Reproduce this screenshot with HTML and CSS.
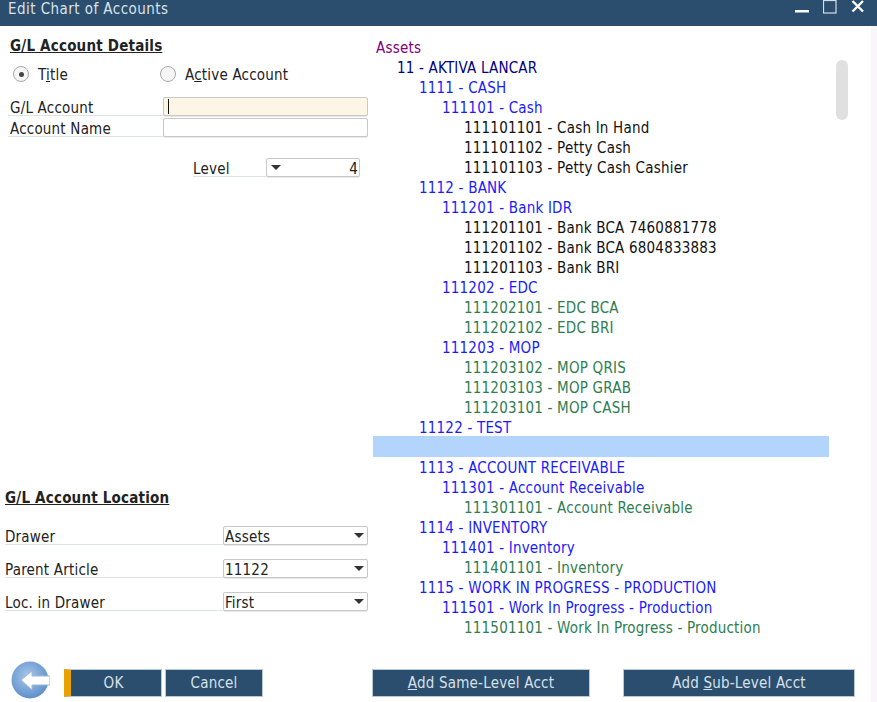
FILE: index.html
```html
<!DOCTYPE html>
<html lang="en">
<head>
<meta charset="utf-8">
<title>Edit Chart of Accounts</title>
<link rel="stylesheet" href="styles.css">
</head>
<body>
<div class="window">
  <header class="titlebar">
    <span class="title">Edit Chart of Accounts</span>
    <div class="controls">
      <svg class="ctl" width="14" height="14" viewBox="0 0 14 14"><rect x="0" y="10" width="14" height="2.5" fill="#fff"/></svg>
      <svg class="ctl" width="14" height="14" viewBox="0 0 14 14"><rect x="0.5" y="0.5" width="12.5" height="12.5" fill="none" stroke="#d5dee6" stroke-width="1.2"/></svg>
      <svg class="ctl" width="14" height="14" viewBox="0 0 14 14"><path d="M1.5 1 L12 11.5 M12 1 L1.5 11.5" stroke="#fff" stroke-width="2.4" fill="none"/></svg>
    </div>
  </header>
  <main class="content">
    <section class="left">
      <div class="details">
        <h2 class="heading">G/L Account Details</h2>
        <div class="radios">
          <label class="radio radio-title"><span class="dot on"></span><span class="radio-text">T<u>i</u>tle</span></label>
          <label class="radio"><span class="dot"></span><span class="radio-text">A<u>c</u>tive Account</span></label>
        </div>
        <div class="field first">
          <span class="lbl">G/L Account</span>
          <span class="input focus"><i class="caret"></i></span>
        </div>
        <div class="field">
          <span class="lbl">Account Name</span>
          <span class="input"></span>
        </div>
        <div class="level">
          <span class="lbl level-lbl">Level</span>
          <span class="input level-input"><i class="arrow"></i><span>4</span></span>
        </div>
      </div>
      <div class="location">
        <h2 class="heading">G/L Account Location</h2>
        <div class="loc-row r1"><span class="lbl">Drawer</span><span class="input sel"><span>Assets</span><i class="arrow"></i></span></div>
        <div class="loc-row r2"><span class="lbl">Parent Article</span><span class="input sel"><span>11122</span><i class="arrow"></i></span></div>
        <div class="loc-row r3"><span class="lbl">Loc. in Drawer</span><span class="input sel"><span>First</span><i class="arrow"></i></span></div>
      </div>
    </section>
    <section class="tree">
      <div class="scroll-thumb"></div>
      <div class="row l0 purple">Assets</div>
      <div class="row l1 navy">11 - AKTIVA LANCAR</div>
      <div class="row l2 blue">1111 - CASH</div>
      <div class="row l3 blue">111101 - Cash</div>
      <div class="row l4 black">111101101 - Cash In Hand</div>
      <div class="row l4 black">111101102 - Petty Cash</div>
      <div class="row l4 black">111101103 - Petty Cash Cashier</div>
      <div class="row l2 blue">1112 - BANK</div>
      <div class="row l3 blue">111201 - Bank IDR</div>
      <div class="row l4 black">111201101 - Bank BCA 7460881778</div>
      <div class="row l4 black">111201102 - Bank BCA 6804833883</div>
      <div class="row l4 black">111201103 - Bank BRI</div>
      <div class="row l3 blue">111202 - EDC</div>
      <div class="row l4 green">111202101 - EDC BCA</div>
      <div class="row l4 green">111202102 - EDC BRI</div>
      <div class="row l3 blue">111203 - MOP</div>
      <div class="row l4 green">111203102 - MOP QRIS</div>
      <div class="row l4 green">111203103 - MOP GRAB</div>
      <div class="row l4 green">111203101 - MOP CASH</div>
      <div class="row l2 blue">11122 - TEST</div>
      <div class="row selected"></div>
      <div class="row l2 blue">1113 - ACCOUNT RECEIVABLE</div>
      <div class="row l3 blue">111301 - Account Receivable</div>
      <div class="row l4 green">111301101 - Account Receivable</div>
      <div class="row l2 blue">1114 - INVENTORY</div>
      <div class="row l3 blue">111401 - Inventory</div>
      <div class="row l4 green">111401101 - Inventory</div>
      <div class="row l2 blue">1115 - WORK IN PROGRESS - PRODUCTION</div>
      <div class="row l3 blue">111501 - Work In Progress - Production</div>
      <div class="row l4 green">111501101 - Work In Progress - Production</div>
    </section>
  </main>
  <footer class="footer">
    <svg class="back" width="40" height="38" viewBox="0 0 40 38">
      <defs><radialGradient id="bg" cx="45%" cy="40%" r="60%"><stop offset="0" stop-color="#a9c8ea"/><stop offset="1" stop-color="#5f90cc"/></radialGradient></defs>
      <circle cx="20" cy="19" r="18.5" fill="url(#bg)"/>
      <path d="M11 19 L22 10 V15 H40 V24 H22 V29 Z" fill="#fff" stroke="#9db6d3" stroke-width="1"/>
    </svg>
    <button class="btn ok">OK</button>
    <button class="btn cancel">Cancel</button>
    <button class="btn same"><u>A</u>dd Same-Level Acct</button>
    <button class="btn sub">Add <u>S</u>ub-Level Acct</button>
  </footer>
</div>
</body>
</html>
```
FILE: styles.css
```css
* { box-sizing: border-box; }
html, body { margin: 0; padding: 0; }
body {
  width: 877px;
  height: 702px;
  overflow: hidden;
  background: #fff;
  font-family: "DejaVu Sans Condensed", "DejaVu Sans", sans-serif;
  font-stretch: condensed;
  font-size: 15px;
  letter-spacing: 0.2px;
  color: #222;
}
.window {
  width: 877px;
  height: 702px;
  display: flex;
  flex-direction: column;
  border-right: 6px solid #faf5fa;
}
.titlebar {
  height: 26px;
  flex: none;
  background: #2b4e6e;
  color: #d9e2ea;
  display: flex;
  justify-content: space-between;
  padding: 0 12px 0 8px;
  margin-right: -6px;
}
.title { font-size: 15px; line-height: 19px; height: 19px; letter-spacing: 0.45px; }
.controls { display: flex; gap: 14px; align-items: flex-start; }
.ctl { display: block; }
.content { flex: 1; display: flex; min-height: 0; }
.left {
  width: 373px;
  flex: none;
  display: flex;
  flex-direction: column;
}
.details { padding: 9px 5px 0 8px; }
.heading {
  margin: 0;
  font-size: 15px;
  line-height: 22px;
  height: 20px;
  font-weight: 700;
  text-decoration: underline;
  color: #222;
}
.details .heading { padding-left: 2px; }
.radios { display: flex; margin-top: 9px; height: 20px; align-items: center; padding-left: 5px; }
.radio { display: flex; align-items: center; gap: 9px; }
.radio-title { width: 147px; }
.radio-text { padding-top: 2px; }
.dot {
  width: 16px; height: 16px; border-radius: 50%;
  border: 1px solid #a8a8a8;
  background: #f6f6f6;
  display: flex; align-items: center; justify-content: center;
}
.dot.on::after { content: ""; width: 5px; height: 5px; border-radius: 50%; background: #444; }
.field { display: flex; height: 19px; margin-top: 2px; }
.field.first { margin-top: 13px; }
.lbl {
  display: block;
  flex: 1;
  line-height: 22px;
  height: 19px;
  padding-left: 2px;
  border-bottom: 1px solid #dde3e8;
  white-space: nowrap;
}
.field .lbl { width: 155px; flex: none; }
.input {
  display: flex;
  align-items: center;
  border: 1px solid #c8c8c8;
  border-radius: 2px;
  background: #fff;
  height: 19px;
  box-shadow: 0 1px 0 #e8e8e8;
}
.input > span { height: 17px; line-height: 21px; }
.field .input { width: 205px; }
.input.focus { background: #fdf5e6; padding-left: 4px; }
.caret { width: 1px; height: 15px; background: #111; display: block; }
.level { display: flex; margin-top: 21px; margin-left: 185px; width: 167px; height: 19px; }
.level-lbl { flex: 0 0 73px; padding-left: 0; }
.level-input { flex: 1; justify-content: space-between; padding: 0 1px 0 4px; }
.arrow {
  display: block;
  width: 0; height: 0;
  border-left: 5px solid transparent;
  border-right: 5px solid transparent;
  border-top: 5px solid #333;
}
.location { margin-top: auto; padding: 0 5px 49px 5px; }
.loc-row { display: flex; height: 20px; }
.loc-row .lbl { flex: 0 0 218px; padding-left: 0; }
.loc-row .input { flex: 1; justify-content: space-between; padding: 0 3px 0 1px; }
.r1 { margin-top: 19px; }
.r2 { margin-top: 13px; }
.r3 { margin-top: 13px; }
.tree {
  flex: 1;
  position: relative;
  padding-top: 11px;
  margin-right: 42px;
  min-width: 0;
}
.scroll-thumb {
  position: absolute;
  left: 463px;
  top: 34px;
  width: 12px;
  height: 60px;
  background: #e0e0e0;
  border-radius: 6px;
}
.row { height: 20px; line-height: 22px; white-space: nowrap; }
.l0 { padding-left: 3px; }
.l1 { padding-left: 24px; }
.l2 { padding-left: 46px; }
.l3 { padding-left: 69px; }
.l4 { padding-left: 91px; }
.purple { color: #800080; }
.navy { color: #000080; }
.blue { color: #1a1aff; }
.black { color: #111; }
.green { color: #2e7d4f; }
.selected { background: #b3d4fc; height: 21px; margin-top: -1px; width: 456px; }
.footer {
  flex: none;
  height: 41px;
  display: flex;
  align-items: flex-start;
  padding: 8px 0 0 10px;
}
.back { display: block; margin-top: -8px; margin-right: 14px; flex: none; }
.btn {
  height: 28px;
  background: #2b4e6e;
  color: #d5e0ea;
  border: 1px solid #b9c9d8;
  font: inherit;
  letter-spacing: inherit;
  padding: 0;
  text-align: center;
}
.ok { width: 98px; border-left: 7px solid #e8a200; padding-right: 5px; }
.cancel { width: 98px; margin-left: 3px; }
.same { width: 218px; margin-left: 109px; }
.sub { width: 232px; margin-left: 33px; }
```
